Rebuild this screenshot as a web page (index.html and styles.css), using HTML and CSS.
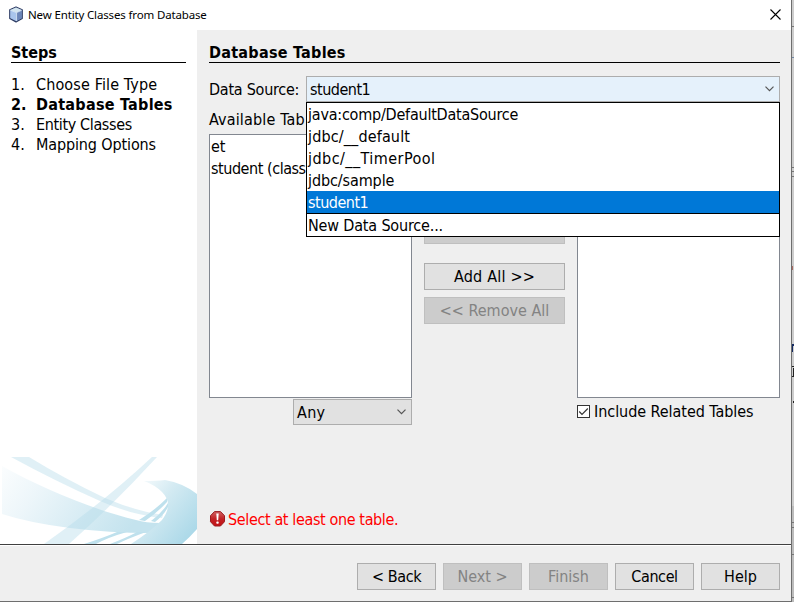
FILE: index.html
```html
<!DOCTYPE html>
<html lang="en">
<head>
<meta charset="utf-8">
<title>New Entity Classes from Database</title>
<link rel="stylesheet" href="styles.css">
</head>
<body>
<div class="screen">
  <div class="window">
    <header class="titlebar">
      <svg class="cube" width="16" height="17" viewBox="0 0 16 18">
        <path d="M8 1 14.6 4v9.2L8 16.8 1.400 13.200V4z" fill="#8aa5d2" stroke="#2e3c63" stroke-width="1.300" stroke-linejoin="round"/>
        <path d="M8 1.600 14 4.300 8.700 6.800 2 4.300z" fill="#d3e5ef"/>
        <path d="M2 4.600 8.600 7v9L2 12.800z" fill="#a9c5ec"/>
        <path d="M8.600 7 14 4.700v8.200L8.600 16z" fill="#6c86b8"/>
        <path d="M2 4.400 8.600 7 14 4.500M8.600 7v9" fill="none" stroke="#e4f1fa" stroke-width=".8"/>
      </svg>
      <span class="caption">New Entity Classes from Database</span>
      <svg class="close" width="11" height="11" viewBox="0 0 11 11"><path d="M.5.5 10.500 10.500M10.500.5.5 10.500" stroke="#000" stroke-width="1.100"/></svg>
    </header>
    <div class="body">
      <aside class="steps">
        <h2><span>Steps</span></h2>
        <ol>
          <li><span class="num">1.</span><span class="t-s1">Choose File Type</span></li>
          <li class="current"><span class="num">2.</span><span class="t-bold">Database Tables</span></li>
          <li><span class="num">3.</span><span class="t-s3">Entity Classes</span></li>
          <li><span class="num">4.</span><span class="t-s4">Mapping Options</span></li>
        </ol>
        <svg class="swoosh" width="197" height="87" viewBox="0 0 197 87">
          <defs>
            <linearGradient id="band" x1="0" y1="0" x2="1" y2=".3"><stop offset="0" stop-color="#fbfdfe"/><stop offset=".3" stop-color="#edf6fa"/><stop offset="1" stop-color="#c4e3ee"/></linearGradient>
            <linearGradient id="curl" x1="0" y1="0" x2="1" y2=".8"><stop offset="0" stop-color="#fff"/><stop offset=".45" stop-color="#d3eaf2"/><stop offset="1" stop-color="#aad8e8"/></linearGradient>
          </defs>
          <path d="M2 9C40 30 90 52 136 63Q146 66 160 66L150 76Q110 76 70 71 30 66 2 57z" fill="url(#band)"/>
          <path d="M11 0H29Q65 22 105 41 135 54 163 58L162 61Q132 58 100 44 55 24 11 0z" fill="#b5dce9" fill-opacity=".42"/>
          <path d="M152 0H157Q113 48 69 87H44Q105 44 152 0z" fill="#b5dce9" fill-opacity=".42"/>
          <path d="M139 63Q154 54 167 41V45Q158 55 145 64zM151 64Q162 56 168 46V50Q164 58 155 65z" fill="#bfe1ed"/>
          <path d="M84 87Q103 81 117 75H127Q109 80 96 87zM110 87Q128 80 137 75H146Q127 82 117 87z" fill="#bfe1ed"/>
          <path d="M144 24Q157 24 165 23 183 26 197 37V72Q190 80 182 87H131Q151 74 162 63 174 47 162 35 155 28 144 24z" fill="url(#curl)"/>
        </svg>
      </aside>
      <main class="panel">
        <h2><span class="t-bold">Database Tables</span></h2>
        <div class="source-row">
          <label class="t-ds">Data Source:</label>
          <div class="combo combo-open">
            <span class="t-sel">student1</span>
            <svg class="chev" width="9" height="6" viewBox="0 0 9 6"><path d="M.5.6 4.500 4.600 8.500.6" fill="none" stroke="#555" stroke-width="1.200"/></svg>
            <ul class="popup">
              <li><span class="t-p1">java:comp/DefaultDataSource</span></li>
              <li><span class="t-p2">jdbc/__default</span></li>
              <li><span class="t-p3">jdbc/__TimerPool</span></li>
              <li><span class="t-p4">jdbc/sample</span></li>
              <li class="selected"><span class="t-sel">student1</span></li>
              <li class="extra"><span class="t-p6">New Data Source...</span></li>
            </ul>
          </div>
        </div>
        <div class="available"><span class="t-av">Available Tab</span></div>
        <div class="tables">
          <div class="list"><div>et</div><div class="t-st">student (class</div></div>
          <div class="movers">
            <div class="btn disabled"></div>
            <div class="btn"><span class="t-add">Add All &gt;&gt;</span></div>
            <div class="btn disabled"><span>&lt;&lt; Remove All</span></div>
          </div>
          <div class="list"></div>
        </div>
        <div class="under">
          <div class="combo any"><span class="t-any">Any</span>
            <svg class="chev" width="9" height="6" viewBox="0 0 9 6"><path d="M.5.6 4.500 4.600 8.500.6" fill="none" stroke="#555" stroke-width="1.200"/></svg>
          </div>
          <div class="related">
            <svg width="13" height="13" viewBox="0 0 13 13"><rect x=".5" y=".5" width="12" height="12" fill="#fff" stroke="#333"/><path d="M2.200 6.500 5 9.300 10.800 3.500" fill="none" stroke="#333" stroke-width="1.200"/></svg>
            <span class="t-rel">Include Related Tables</span>
          </div>
        </div>
        <div class="error">
          <svg width="16" height="16" viewBox="0 0 16 16">
            <defs><linearGradient id="stop" x1="0" y1="0" x2="0" y2="1"><stop offset="0" stop-color="#cf6161"/><stop offset=".5" stop-color="#c22326"/><stop offset="1" stop-color="#c41115"/></linearGradient></defs>
            <path d="M5.500.6h6l4 4.100v6L11.500 15h-6l-4-4.300v-6z" fill="url(#stop)" stroke="#991c20"/>
            <path d="M7.300 2.600h2.400L9.200 9.300H7.800z" fill="#fff"/><rect x="7.300" y="10.500" width="2.400" height="2.300" rx=".8" fill="#fff"/>
          </svg>
          <span class="t-err">Select at least one table.</span>
        </div>
      </main>
    </div>
    <footer class="footer">
      <div class="btn"><span class="t-back">&lt; Back</span></div>
      <div class="btn disabled"><span>Next &gt;</span></div>
      <div class="btn disabled"><span>Finish</span></div>
      <div class="btn"><span class="t-back">Cancel</span></div>
      <div class="btn"><span>Help</span></div>
    </footer>
  </div>
  <svg class="behind" width="2" height="602" viewBox="0 0 2 602">
    <path d="M0 0h2v602H0z" fill="#cdcdcd"/>
    <path d="M0 506h2v96H0z" fill="#bcbcbc"/>
    <path d="M0 26h2v1H0zM0 167h2v1H0zM0 171h2v1H0zM0 176h2v1H0zM0 522h2v1H0zM0 527h2v1H0zM0 554h2v1H0zM0 597h2v1H0z" fill="#777"/>
    <path d="M0 57h2v1H0z" fill="#7188a5"/>
    <path d="M0 266h1v4H0z" fill="#a96b62"/>
    <path d="M0 344h2v2H0zM0 346h1v6H0z" fill="#152b62"/>
    <path d="M0 366h2v1H0zM1 368h1v8H1zM0 376h2v1H0zM1 401h1v2H1z" fill="#222"/>
  </svg>
</div>
</body>
</html>
```
FILE: styles.css
```css
* { box-sizing: border-box; }
body {
  margin: 0;
  font: 16px/20px "DejaVu Sans Condensed", "DejaVu Sans", sans-serif;
  font-stretch: condensed;
  color: #000;
  overflow: hidden;
}
span, label { white-space: nowrap; }
.screen { display: flex; width: 794px; height: 602px; }
.window {
  display: flex;
  flex-direction: column;
  width: 792px;
  background: #efefef;
  border-right: 1px solid #6e6e6e;
  border-bottom: 1px solid #6e6e6e;
}
.titlebar { display: flex; align-items: center; height: 30px; padding: 0 10px 2px 8px; background: #fff; }
.caption { margin-left: 4px; padding-top: 2px; font: 11.5px/16px "Noto Sans", sans-serif; letter-spacing: -0.15px; }
.close { margin-left: auto; }
.body { display: flex; height: 514px; }
.steps { display: flex; flex-direction: column; width: 197px; background: #fff; }
h2 { margin: 0; height: 33px; padding-top: 13px; font-size: 16px; line-height: 20px; border-bottom: 1px solid #000; }
.steps h2 { margin: 0 11px; }
ol, ul { margin: 0; padding: 0; list-style: none; }
.steps ol { padding: 12px 0 0 11px; }
.steps li { display: flex; height: 20px; }
.num { width: 25px; }
.current { font-weight: bold; }
.swoosh { display: block; margin-top: auto; }
.panel { width: 594px; padding: 0 11px 0 12px; }
.source-row { display: flex; align-items: center; height: 26px; margin-top: 13px; }
.source-row label { width: 97px; padding-top: 1px; }
.combo {
  position: relative;
  display: flex;
  align-items: center;
  justify-content: space-between;
  height: 26px;
  padding: 0 5px 0 3px;
  background: #e1e1e1;
  border: 1px solid #adadad;
}
.combo > span { padding-top: 2px; }
.combo-open { width: 474px; background: #e5f1fb; }
.popup { position: absolute; z-index: 2; top: 25px; left: -1px; width: 474px; background: #fff; border: 1px solid #000; }
.popup li { height: 22px; padding: 2px 0 0 1px; }
.popup .selected { background: #0078d7; color: #fff; }
.popup .extra { height: 23px; border-top: 1px solid #000; }
.available { height: 32px; padding-top: 8px; }
.tables { display: flex; gap: 12px; height: 264px; }
.list { width: 203px; padding: 1px; border: 1px solid #828790; background: #fff; }
.list div { height: 22px; line-height: 21px; white-space: nowrap; }
.movers { display: flex; flex-direction: column; width: 141px; padding-top: 83px; }
.btn {
  display: flex;
  align-items: center;
  justify-content: center;
  height: 27px;
  background: #e1e1e1;
  border: 1px solid #adadad;
}
.movers .btn + .btn { margin-top: 19px; }
.movers .btn + .btn + .btn { margin-top: 7px; }
.disabled { background: #ccc; border-color: #bfbfbf; color: #838383; }
.under { display: flex; padding: 1px 0 0 84px; }
.any { width: 119px; }
.related { display: flex; align-items: center; height: 25px; margin-left: 165px; gap: 4px; }
.related svg { margin-bottom: 1px; }
.error { display: flex; align-items: center; height: 20px; margin-top: 84px; gap: 3px; color: #f00; }
.error span { padding-top: 2px; }
.footer {
  display: flex;
  justify-content: flex-end;
  gap: 7px;
  height: 57px;
  padding: 18px 11px 0 0;
  border-top: 1px solid #404040;
  box-shadow: inset 0 1px #fff;
}
.footer .btn { width: 79px; }
.behind { display: block; }

/* Tracking per label */
.t-bold { letter-spacing: 0.27px; }
.t-s1 { letter-spacing: 0.13px; }
.t-s3 { letter-spacing: -0.36px; }
.t-s4 { letter-spacing: -0.13px; }
.t-ds { letter-spacing: -0.25px; }
.t-sel { letter-spacing: -0.5px; }
.t-p1 { letter-spacing: -0.22px; }
.t-p2 { letter-spacing: 0.14px; }
.t-p3 { letter-spacing: 0.45px; }
.t-p4 { letter-spacing: -0.1px; }
.t-p6 { letter-spacing: -0.17px; }
.t-av { letter-spacing: 0.15px; }
.t-st { letter-spacing: -0.45px; }
.t-add { letter-spacing: 0.2px; }
.t-any { letter-spacing: 0.3px; }
.t-rel { letter-spacing: -0.05px; }
.t-err { letter-spacing: -0.37px; }
.t-back { letter-spacing: -0.4px; }
```
